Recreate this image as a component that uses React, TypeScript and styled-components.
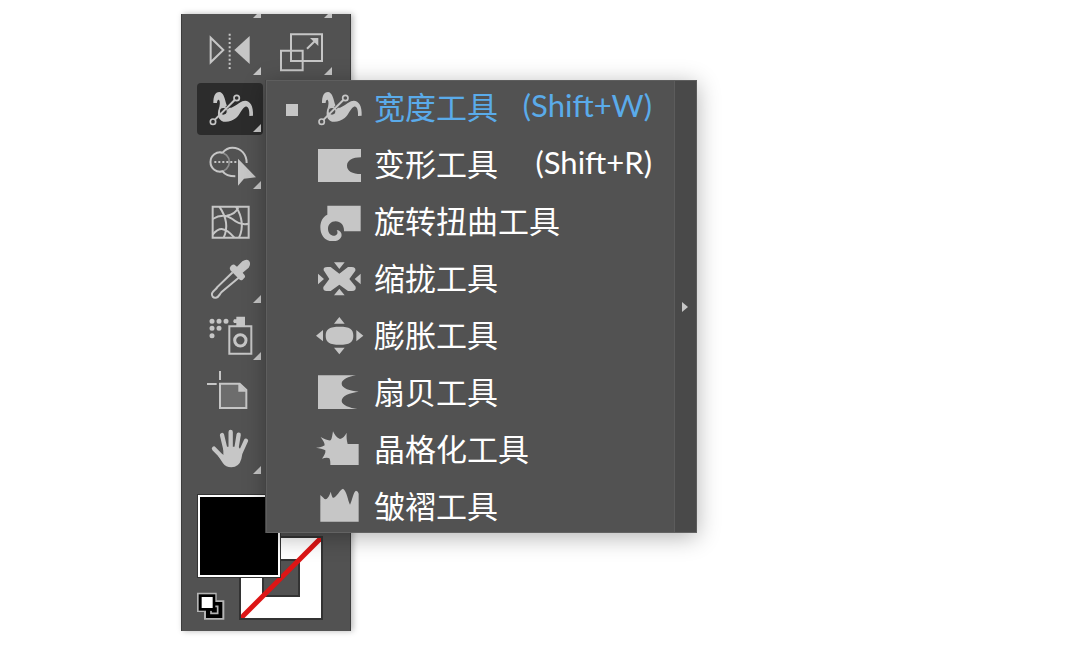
import React from "react";
import styled, { createGlobalStyle, css } from "styled-components";

const GlobalStyle = createGlobalStyle`
  *, *::before, *::after { box-sizing: border-box; }
  body {
    margin: 0;
    background: #fff;
    font-family: "Noto Sans CJK SC", "Noto Sans", sans-serif;
  }
`;

const INK = "#c6c6c6";
const PANEL = "#525252";

const Page = styled.main`
  display: flex;
  align-items: flex-start;
  padding: 14px 16px 14px 181px;
`;

const Toolbar = styled.aside`
  display: flex;
  flex-direction: column;
  gap: 17px;
  padding: 0 16px 11px 15px;
  background: ${PANEL};
  border-left: 1px solid #3c3c3c;
  border-right: 1px solid #3c3c3c;
  box-shadow: 2px 0 6px rgba(0, 0, 0, 0.28);
`;

const ToolGrid = styled.div`
  display: grid;
  grid-template-columns: 66px 66px;
  gap: 5px;
`;

const corner = css`
  &::after {
    content: "";
    position: absolute;
    right: 2px;
    bottom: 3px;
    width: 8px;
    height: 8px;
    background: ${INK};
    clip-path: polygon(100% 0, 100% 100%, 0 100%);
  }
`;

const ScrolledTool = styled.div`
  position: relative;
  height: 7px;
  overflow: hidden;
  ${corner}
`;

const ToolCell = styled.div`
  position: relative;
  grid-column: ${(p: { $column?: number }) => p.$column ?? 1};
`;

const ToolButton = styled.button<{ $selected?: boolean; $group?: boolean }>`
  position: relative;
  display: block;
  width: 66px;
  height: 52px;
  padding: 0;
  border: 0;
  border-radius: 4px;
  color: ${INK};
  background: ${(p) => (p.$selected ? "#2c2c2c" : "transparent")};
  --ground: ${(p) => (p.$selected ? "#2c2c2c" : PANEL)};
  cursor: pointer;
  ${(p) => p.$group && corner}
`;

const Glyph = styled.svg`
  display: block;
  width: 100%;
  height: 100%;
  fill: currentColor;
`;

const Swatches = styled.div`
  display: grid;
  grid-template-columns: repeat(3, 42px);
  grid-template-rows: repeat(3, 42px);
`;

const Swatch = styled.button`
  padding: 0;
  cursor: pointer;
`;

const FillSwatch = styled(Swatch)`
  grid-area: 1 / 1 / 3 / 3;
  z-index: 1;
  border: 1px solid #333;
  background: #000;
  box-shadow: inset 0 0 0 2px #fff;
`;

const StrokeSwatch = styled(Swatch)`
  grid-area: 2 / 2 / 4 / 4;
  border: 2px solid #333;
  background: #fff;
`;

const DefaultColors = styled.button`
  grid-area: 3 / 1;
  align-self: end;
  width: 28px;
  height: 28px;
  padding: 0;
  border: 0;
  background: none;
  cursor: pointer;
`;

const Flyout = styled.div`
  position: absolute;
  z-index: 2;
  top: -3px;
  left: 69px;
  display: flex;
  min-width: 431px;
  color: #fff;
  background: ${PANEL};
  box-shadow: inset 1px 1px 0 #5e5e5e, inset -1px -1px 0 #636363,
    -1px 0 0 #434343, 0 4px 22px rgba(0, 0, 0, 0.3);
  --ground: ${PANEL};
`;

const Items = styled.div`
  display: flex;
  flex: 1;
  flex-direction: column;
  gap: 3px;
`;

const Item = styled.button<{ $current?: boolean }>`
  display: flex;
  align-items: center;
  height: 54px;
  padding: 0 22px 0 20px;
  border: 0;
  font: inherit;
  font-size: 31px;
  line-height: 40px;
  text-align: left;
  white-space: nowrap;
  color: ${(p) => (p.$current ? "#5aabea" : "#fff")};
  background: none;
  cursor: pointer;
`;

const Marker = styled.span<{ $on?: boolean }>`
  width: 12px;
  height: 12px;
  margin: 6px 18px 0 0;
  background: ${(p) => (p.$on ? INK : "transparent")};
`;

const ItemIcon = styled.span`
  width: 48px;
  height: 40px;
  margin-right: 10px;
  color: ${INK};
`;

const Label = styled.span`
  flex: 1;
  padding-bottom: 2px;
`;

const Shortcut = styled.kbd`
  padding-bottom: 4px;
  font-family: Lato, "Noto Sans", sans-serif;
  font-size: 31px;
`;

const TearOff = styled.button`
  display: flex;
  align-items: center;
  justify-content: center;
  width: 23px;
  margin: 1px 0;
  padding: 0 2px 0 0;
  border: 1px solid #5c5c5c;
  border-width: 0 1px;
  color: ${INK};
  background: #494949;
  cursor: pointer;
`;

type IconProps = { box: string; children: React.ReactNode };
const Icon = ({ box, children }: IconProps) => (
  <Glyph viewBox={box} aria-hidden="true">
    {children}
  </Glyph>
);

const line = { fill: "none", stroke: "currentColor" };

const WidthShape = () => (
  <>
    <path d="M171 99C171 80 176 66 189 66C201 67 205 84 209 100C212 110 217 115 225 113C234 110 245 101 258 94C276 87 292 102 290 137L279 138C280 118 275 107 267 110C256 115 251 134 239 144C226 155 206 159 195 152C184 145 183 130 187 118C191 106 192 95 188 89C184 88 182 94 182 99Z" />
    <path d="M200 125L235 90" {...line} strokeWidth="10" style={{ stroke: "var(--ground)" }} />
    <circle cx="201" cy="124" r="12" strokeWidth="4" stroke="currentColor" style={{ fill: "var(--ground)" }} />
    <path d="M176 149L235 90" {...line} strokeWidth="6" />
    <circle cx="170" cy="155" r="8" strokeWidth="5" stroke="currentColor" style={{ fill: "var(--ground)" }} />
    <circle cx="241" cy="84" r="8" strokeWidth="5" stroke="currentColor" style={{ fill: "var(--ground)" }} />
  </>
);

const tools = [
  {
    name: "镜像工具",
    group: true,
    icon: (
      <Icon box="66 63 198 156">
        <path d="M107 98V172L145 135Z" {...line} strokeWidth="6" />
        <path d="M164 86V192" {...line} strokeWidth="6" strokeDasharray="6 6.5" />
        <path d="M224 93V177L178 135Z" />
      </Icon>
    ),
  },
  {
    name: "比例缩放工具",
    group: true,
    column: 2,
    icon: (
      <Icon box="279 63 198 156">
        <path d="M348 88H441V168H348ZM318 137H383V196H318ZM396 131L422 106" {...line} strokeWidth="6" />
        <path d="M405 99H430V123Z" />
      </Icon>
    ),
  },
  {
    name: "宽度工具",
    group: true,
    selected: true,
    icon: (
      <Icon box="122 39 198 156">
        <WidthShape />
      </Icon>
    ),
  },
  {
    name: "形状生成器工具",
    group: true,
    icon: (
      <Icon box="66 15 198 156">
        <path d="M134 52A29 29 0 0 1 134 110" {...line} strokeWidth="5" opacity=".5" />
        <path d="M143 53A29 29 0 1 0 143 109C150 119 164 124 181 124M143 53C152 42 160 38 172 38C198 38 215 58 215 84" {...line} strokeWidth="6" />
        <path d="M118 81H184" {...line} strokeWidth="6" strokeDasharray="6 6" />
        <path d="M189 71V152L207 131L243 127Z" />
      </Icon>
    ),
  },
  {
    name: "网格工具",
    icon: (
      <Icon box="66 186 198 156">
        <path d="M113 215H221V308H113Z" {...line} strokeWidth="6" />
        <path d="M133 215C155 247 161 276 146 308M183 215C201 243 207 278 192 308M113 252C134 239 153 238 172 252C190 267 205 270 221 266M113 299C133 275 151 276 178 308M155 242C174 239 185 229 190 217" {...line} strokeWidth="6" />
      </Icon>
    ),
  },
  {
    name: "吸管工具",
    group: true,
    icon: (
      <Icon box="66 12 198 156">
        <path d="M173 67L127 111C124 118 115 121 111 130C109 138 115 145 123 143C132 142 133 133 139 127L191 83" {...line} strokeWidth="6" />
        <path d="M170 46Q176 41 182 47L186 50L202 34Q214 26 222 32Q229 41 221 53L203 68L208 74Q213 80 207 85L203 89Q197 93 192 87L166 61Q161 55 167 49Z" />
      </Icon>
    ),
  },
  {
    name: "符号喷枪工具",
    group: true,
    icon: (
      <Icon box="66 183 198 156">
        <path d="M111 214h.1M132 214h.1M153 214h.1M111 235h.1M132 235h.1M111 257h.1" {...line} strokeWidth="15" strokeLinecap="round" />
        <path d="M184 200H210V228H184V219H177Q172 214 177 208H184Z" />
        <path d="M163 229H229V311H163Z" {...line} strokeWidth="6" />
        <circle cx="196" cy="271" r="17" {...line} strokeWidth="9" />
      </Icon>
    ),
  },
  {
    name: "画板工具",
    icon: (
      <Icon box="66 9 198 156">
        <path d="M135 18V45M96 57H125" {...line} strokeWidth="6" />
        <path d="M135 56H194L214 75V129H135Z" stroke="currentColor" strokeWidth="6" fill="#6d6d6d" />
        <path d="M190 54V80H216Z" />
      </Icon>
    ),
  },
  {
    name: "抓手工具",
    group: true,
    icon: (
      <Icon box="66 180 198 156">
        <path d="M151 252L141 210M167 248V201M184 252L191 209M198 260L213 227M142 277L117 251" {...line} strokeWidth="13" strokeLinecap="round" />
        <path d="M145 245H190L203 262L199 282Q192 307 169 307Q152 307 144 295L129 272L138 266L145 270Z" />
      </Icon>
    ),
  },
];

const items = [
  { label: "宽度工具", shortcut: "(Shift+W)", current: true, icon: <Icon box="153 51 144 120"><WidthShape /></Icon> },
  {
    label: "变形工具",
    shortcut: "(Shift+R)",
    icon: (
      <Icon box="153 222 144 120">
        <path d="M159 237H288V262C262 262 246 272 246 287C246 303 262 312 288 312V336H159Z" />
      </Icon>
    ),
  },
  {
    label: "旋转扭曲工具",
    icon: (
      <Icon box="48 33 144 120">
        <path d="M82 47H182V124H132C133 106 122 94 107 94C93 94 84 104 84 116C84 130 94 138 104 137C112 136 115 128 110 120C122 121 127 131 124 140C120 149 110 154 98 154C76 154 61 137 61 112C61 94 69 80 82 74Z" />
      </Icon>
    ),
  },
  {
    label: "缩拢工具",
    icon: (
      <Icon box="48 204 144 120">
        <path d="M71 241Q69 231 82 231H92L118 251L144 231H155Q168 231 166 242L148 267L167 290Q169 303 156 303H144L118 284L92 303H80Q68 303 70 291L88 267ZM102 217H134L118 237ZM102 316H134L118 296ZM54 251V283L72 267ZM182 251V283L164 267Z" />
      </Icon>
    ),
  },
  {
    label: "膨胀工具",
    icon: (
      <Icon box="48 30 144 120">
        <path d="M119 65C149 65 160 72 160 92C160 112 149 119 119 119C89 119 77 112 77 92C77 72 89 65 119 65ZM118 36L134 56H102ZM102 128H134L118 148ZM48 92L69 75V109ZM190 92L169 75V109Z" />
      </Icon>
    ),
  },
  {
    label: "扇贝工具",
    icon: (
      <Icon box="48 201 144 120">
        <path d="M54 211H168C146 214 125 224 125 236C125 250 150 257 176 260C150 263 125 272 125 288C125 300 150 309 172 312H54Z" />
      </Icon>
    ),
  },
  {
    label: "晶格化工具",
    icon: (
      <Icon box="48 27 144 120">
        <path d="M176 72H143C140 60 139 50 140 38C135 48 128 55 120 57C110 54 104 44 99 34C97 46 96 56 92 61C82 62 72 57 62 51C68 60 74 68 74 76C68 80 58 83 48 83C58 85 70 87 76 91C78 98 72 108 66 116C74 113 84 112 88 115C91 120 91 128 91 135H176Z" />
      </Icon>
    ),
  },
  {
    label: "皱褶工具",
    icon: (
      <Icon box="48 198 144 120">
        <path d="M61 225L70 233Q76 241 82 235C88 228 90 222 92 215C95 224 96 234 101 233C113 228 118 210 129 206C141 214 143 240 150 254C157 240 160 216 168 212Q175 213 176 221V305H61Z" />
      </Icon>
    ),
  },
];

const ToolFlyout = () => (
  <Flyout role="menu">
    <Items>
      {items.map((item) => (
        <Item key={item.label} role="menuitemradio" aria-checked={!!item.current} $current={item.current}>
          <Marker $on={item.current} />
          <ItemIcon>{item.icon}</ItemIcon>
          <Label>{item.label}</Label>
          {item.shortcut && <Shortcut>{item.shortcut}</Shortcut>}
        </Item>
      ))}
    </Items>
    <TearOff aria-label="拖出">
      <svg width="6" height="10" viewBox="0 0 6 10" fill="currentColor" aria-hidden="true">
        <path d="M0 0L6 5L0 10Z" />
      </svg>
    </TearOff>
  </Flyout>
);

export default function App() {
  return (
    <>
      <GlobalStyle />
      <Page>
        <Toolbar>
          <ToolGrid>
            <ScrolledTool />
            <ScrolledTool />
            {tools.map((tool) => (
              <ToolCell key={tool.name} $column={tool.column}>
                <ToolButton aria-label={tool.name} $selected={tool.selected} $group={tool.group}>
                  {tool.icon}
                </ToolButton>
                {tool.selected && <ToolFlyout />}
              </ToolCell>
            ))}
          </ToolGrid>
          <Swatches>
            <FillSwatch aria-label="填色" />
            <StrokeSwatch aria-label="描边">
              <Glyph viewBox="0 0 80 80" aria-hidden="true">
                <rect x="22" y="22" width="36" height="36" fill="#525252" stroke="#333" strokeWidth="2" />
                <path d="M0 80L80 0" stroke="#dd1515" strokeWidth="5" />
              </Glyph>
            </StrokeSwatch>
            <DefaultColors aria-label="默认填色和描边">
              <Glyph viewBox="62 333 84 84" aria-hidden="true">
                <path d="M62 335H121V358H144V416H83V393H62Z" fill="#b4b4b4" />
                <path d="M89 363H138V411H89Z" fill="#000" />
                <path d="M107 376H124V397H104V389" fill="none" stroke="#b4b4b4" strokeWidth="5" />
                <rect x="67" y="340" width="50" height="49" fill="#000" />
                <rect x="76" y="348" width="33" height="33" fill="#fff" />
              </Glyph>
            </DefaultColors>
          </Swatches>
        </Toolbar>
      </Page>
    </>
  );
}
